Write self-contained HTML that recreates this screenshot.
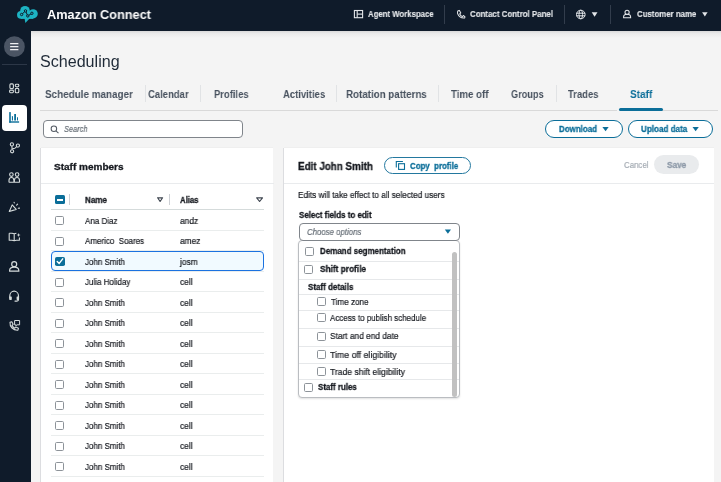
<!DOCTYPE html>
<html><head><meta charset="utf-8"><style>
html,body{margin:0;padding:0;}
body{width:721px;height:482px;overflow:hidden;position:relative;background:#f4f4f4;font-family:"Liberation Sans",sans-serif;}
div,span.t{position:absolute;}
span.t{white-space:pre;will-change:transform;}
span.r{-webkit-text-stroke:0.2px currentColor;}
span.b{-webkit-text-stroke:0.3px currentColor;}
span.h{-webkit-text-stroke:0.15px currentColor;}
svg{position:absolute;left:0;top:0;}
</style></head><body>
<div style="left:0px;top:0px;width:721px;height:31px;background:#0f1b2a"></div><div style="left:0px;top:31px;width:31px;height:451px;background:#0f1b2a"></div><div style="left:31px;top:31px;width:690px;height:7px;background:linear-gradient(#d8d8d9,#eaeaea 35%,#f4f4f4)"></div><span class="t" style="left:46.90px;top:8.76px;font-size:12.8px;line-height:12.8px;font-weight:700;color:#ffffff;transform:scaleX(0.9941);transform-origin:0 0;">Amazon Connect</span><span class="t h" style="left:367.60px;top:10.11px;font-size:9.2px;line-height:9.2px;font-weight:700;color:#e3e6e9;transform:scaleX(0.8484);transform-origin:0 0;">Agent Workspace</span><div style="left:444px;top:5px;width:1px;height:18.5px;background:#323d4c"></div><div style="left:564px;top:5px;width:1px;height:18.5px;background:#323d4c"></div><div style="left:610.2px;top:5px;width:1px;height:18.5px;background:#323d4c"></div><span class="t h" style="left:470.30px;top:10.11px;font-size:9.2px;line-height:9.2px;font-weight:700;color:#e3e6e9;transform:scaleX(0.8602);transform-origin:0 0;">Contact Control Panel</span><span class="t h" style="left:636.50px;top:10.21px;font-size:9.2px;line-height:9.2px;font-weight:700;color:#e3e6e9;transform:scaleX(0.8540);transform-origin:0 0;">Customer name</span><div style="left:2px;top:64px;width:25px;height:1px;background:#2c3747"></div><div style="left:1.7px;top:105.3px;width:25.3px;height:25.5px;background:#ffffff;border-radius:4px"></div><span class="t" style="left:40.40px;top:54.26px;font-size:16px;line-height:16px;font-weight:400;color:#1f2a37;transform:scaleX(1.0054);transform-origin:0 0;">Scheduling</span><div style="left:40px;top:109.5px;width:577px;height:1.5px;background:#d9d9d9"></div><div style="left:619px;top:109.5px;width:99px;height:1.5px;background:#d9d9d9"></div><div style="left:619px;top:108px;width:44px;height:2.8px;background:#0b6e99;border-radius:1.5px"></div><span class="t" style="left:45.20px;top:89.11px;font-size:11.8px;line-height:11.8px;font-weight:700;color:#47515e;transform:scaleX(0.8379);transform-origin:0 0;">Schedule manager</span><span class="t" style="left:148.30px;top:89.11px;font-size:11.8px;line-height:11.8px;font-weight:700;color:#47515e;transform:scaleX(0.8042);transform-origin:0 0;">Calendar</span><span class="t" style="left:213.50px;top:89.11px;font-size:11.8px;line-height:11.8px;font-weight:700;color:#47515e;transform:scaleX(0.7994);transform-origin:0 0;">Profiles</span><span class="t" style="left:282.90px;top:89.11px;font-size:11.8px;line-height:11.8px;font-weight:700;color:#47515e;transform:scaleX(0.8045);transform-origin:0 0;">Activities</span><span class="t" style="left:346.10px;top:89.11px;font-size:11.8px;line-height:11.8px;font-weight:700;color:#47515e;transform:scaleX(0.8274);transform-origin:0 0;">Rotation patterns</span><span class="t" style="left:451.20px;top:89.11px;font-size:11.8px;line-height:11.8px;font-weight:700;color:#47515e;transform:scaleX(0.8211);transform-origin:0 0;">Time off</span><span class="t" style="left:510.90px;top:89.11px;font-size:11.8px;line-height:11.8px;font-weight:700;color:#47515e;transform:scaleX(0.7771);transform-origin:0 0;">Groups</span><span class="t" style="left:567.50px;top:89.11px;font-size:11.8px;line-height:11.8px;font-weight:700;color:#47515e;transform:scaleX(0.7990);transform-origin:0 0;">Trades</span><span class="t" style="left:630.00px;top:89.11px;font-size:11.8px;line-height:11.8px;font-weight:700;color:#0b6e99;transform:scaleX(0.8544);transform-origin:0 0;">Staff</span><div style="left:144.5px;top:85.3px;width:1px;height:17px;background:#e1e3e5"></div><div style="left:200.3px;top:85.3px;width:1px;height:17px;background:#e1e3e5"></div><div style="left:336.1px;top:85.3px;width:1px;height:17px;background:#e1e3e5"></div><div style="left:438.0px;top:85.3px;width:1px;height:17px;background:#e1e3e5"></div><div style="left:555.5px;top:85.3px;width:1px;height:17px;background:#e1e3e5"></div><div style="left:43.2px;top:120.2px;width:199.5px;height:17.8px;background:#fff;border:1px solid #80858b;border-radius:4px;box-sizing:border-box"></div><span class="t r" style="left:64.20px;top:124.98px;font-size:9px;line-height:9px;font-weight:400;color:#687078;transform:scaleX(0.8272);transform-origin:0 0;font-style:italic;">Search</span><div style="left:545.4px;top:119.9px;width:77.2px;height:18px;background:#fff;border:1.6px solid #0b6e99;border-radius:9px;box-sizing:border-box"></div><span class="t b" style="left:558.50px;top:124.91px;font-size:9.2px;line-height:9.2px;font-weight:700;color:#0b6e99;transform:scaleX(0.8655);transform-origin:0 0;">Download</span><div style="left:628.4px;top:119.9px;width:84.4px;height:18px;background:#fff;border:1.6px solid #0b6e99;border-radius:9px;box-sizing:border-box"></div><span class="t b" style="left:640.80px;top:124.91px;font-size:9.2px;line-height:9.2px;font-weight:700;color:#0b6e99;transform:scaleX(0.8787);transform-origin:0 0;">Upload data</span><div style="left:40.7px;top:148px;width:232.5px;height:340px;background:#fff;box-shadow:-1px 0 0.5px #dcdde0, 0 -1px 1px #efefef"></div><span class="t b" style="left:54.00px;top:161.69px;font-size:9.7px;line-height:9.7px;font-weight:700;color:#16191f;transform:scaleX(1.0340);transform-origin:0 0;">Staff members</span><div style="left:40.5px;top:183px;width:233px;height:1px;background:#e9ebed"></div><div style="left:55.2px;top:195px;width:9.4px;height:9.2px;background:#0b6e99;border-radius:1.5px"></div><div style="left:56.9px;top:198.9px;width:6.1px;height:1.7px;background:#fff"></div><div style="left:69.3px;top:194.3px;width:1px;height:10.5px;background:#cdd0d5"></div><span class="t b" style="left:85.20px;top:196.31px;font-size:9.2px;line-height:9.2px;font-weight:700;color:#16191f;transform:scaleX(0.8749);transform-origin:0 0;">Name</span><div style="left:169.3px;top:193.7px;width:1px;height:11.7px;background:#cdd0d5"></div><span class="t b" style="left:180.40px;top:196.31px;font-size:9.2px;line-height:9.2px;font-weight:700;color:#16191f;transform:scaleX(0.8421);transform-origin:0 0;">Alias</span><div style="left:50.8px;top:209.2px;width:213.5px;height:1px;background:#d5dbdb"></div><div style="left:50.8px;top:229.8px;width:213.5px;height:0.8px;background:#eaeded"></div><div style="left:55.3px;top:216.1px;width:9.2px;height:9px;border:1.3px solid #8d9399;border-radius:1.6px;box-sizing:border-box;background:#fff"></div><span class="t r" style="left:85.30px;top:216.61px;font-size:9.2px;line-height:9.2px;font-weight:400;color:#16191f;transform:scaleX(0.8696);transform-origin:0 0;">Ana Diaz</span><span class="t r" style="left:180.40px;top:216.61px;font-size:9.2px;line-height:9.2px;font-weight:400;color:#16191f;transform:scaleX(0.9130);transform-origin:0 0;">andz</span><div style="left:50.8px;top:250.3px;width:213.5px;height:0.8px;background:#eaeded"></div><div style="left:55.3px;top:236.6px;width:9.2px;height:9px;border:1.3px solid #8d9399;border-radius:1.6px;box-sizing:border-box;background:#fff"></div><span class="t r" style="left:85.30px;top:237.11px;font-size:9.2px;line-height:9.2px;font-weight:400;color:#16191f;transform:scaleX(0.8696);transform-origin:0 0;">Americo &nbsp;Soares</span><span class="t r" style="left:180.40px;top:237.11px;font-size:9.2px;line-height:9.2px;font-weight:400;color:#16191f;transform:scaleX(0.9130);transform-origin:0 0;">amez</span><div style="left:50.8px;top:270.8px;width:213.5px;height:0.8px;background:#eaeded"></div><div style="left:50.8px;top:251.1px;width:213.4px;height:20.4px;background:#f1faff;border:1.5px solid #1b72e0;border-radius:4px;box-sizing:border-box"></div><div style="left:55.1px;top:256.8px;width:9.6px;height:9.1px;background:#0b6e99;border-radius:1.8px"></div><span class="t r" style="left:85.30px;top:257.61px;font-size:9.2px;line-height:9.2px;font-weight:400;color:#16191f;transform:scaleX(0.8696);transform-origin:0 0;">John Smith</span><span class="t r" style="left:180.40px;top:257.61px;font-size:9.2px;line-height:9.2px;font-weight:400;color:#16191f;transform:scaleX(0.9130);transform-origin:0 0;">josm</span><div style="left:50.8px;top:291.3px;width:213.5px;height:0.8px;background:#eaeded"></div><div style="left:55.3px;top:277.6px;width:9.2px;height:9px;border:1.3px solid #8d9399;border-radius:1.6px;box-sizing:border-box;background:#fff"></div><span class="t r" style="left:85.30px;top:278.11px;font-size:9.2px;line-height:9.2px;font-weight:400;color:#16191f;transform:scaleX(0.8696);transform-origin:0 0;">Julia Holiday</span><span class="t r" style="left:180.40px;top:278.11px;font-size:9.2px;line-height:9.2px;font-weight:400;color:#16191f;transform:scaleX(0.9130);transform-origin:0 0;">cell</span><div style="left:50.8px;top:311.8px;width:213.5px;height:0.8px;background:#eaeded"></div><div style="left:55.3px;top:298.1px;width:9.2px;height:9px;border:1.3px solid #8d9399;border-radius:1.6px;box-sizing:border-box;background:#fff"></div><span class="t r" style="left:85.30px;top:298.61px;font-size:9.2px;line-height:9.2px;font-weight:400;color:#16191f;transform:scaleX(0.8696);transform-origin:0 0;">John Smith</span><span class="t r" style="left:180.40px;top:298.61px;font-size:9.2px;line-height:9.2px;font-weight:400;color:#16191f;transform:scaleX(0.9130);transform-origin:0 0;">cell</span><div style="left:50.8px;top:332.3px;width:213.5px;height:0.8px;background:#eaeded"></div><div style="left:55.3px;top:318.6px;width:9.2px;height:9px;border:1.3px solid #8d9399;border-radius:1.6px;box-sizing:border-box;background:#fff"></div><span class="t r" style="left:85.30px;top:319.11px;font-size:9.2px;line-height:9.2px;font-weight:400;color:#16191f;transform:scaleX(0.8696);transform-origin:0 0;">John Smith</span><span class="t r" style="left:180.40px;top:319.11px;font-size:9.2px;line-height:9.2px;font-weight:400;color:#16191f;transform:scaleX(0.9130);transform-origin:0 0;">cell</span><div style="left:50.8px;top:352.8px;width:213.5px;height:0.8px;background:#eaeded"></div><div style="left:55.3px;top:339.1px;width:9.2px;height:9px;border:1.3px solid #8d9399;border-radius:1.6px;box-sizing:border-box;background:#fff"></div><span class="t r" style="left:85.30px;top:339.61px;font-size:9.2px;line-height:9.2px;font-weight:400;color:#16191f;transform:scaleX(0.8696);transform-origin:0 0;">John Smith</span><span class="t r" style="left:180.40px;top:339.61px;font-size:9.2px;line-height:9.2px;font-weight:400;color:#16191f;transform:scaleX(0.9130);transform-origin:0 0;">cell</span><div style="left:50.8px;top:373.3px;width:213.5px;height:0.8px;background:#eaeded"></div><div style="left:55.3px;top:359.6px;width:9.2px;height:9px;border:1.3px solid #8d9399;border-radius:1.6px;box-sizing:border-box;background:#fff"></div><span class="t r" style="left:85.30px;top:360.11px;font-size:9.2px;line-height:9.2px;font-weight:400;color:#16191f;transform:scaleX(0.8696);transform-origin:0 0;">John Smith</span><span class="t r" style="left:180.40px;top:360.11px;font-size:9.2px;line-height:9.2px;font-weight:400;color:#16191f;transform:scaleX(0.9130);transform-origin:0 0;">cell</span><div style="left:50.8px;top:393.8px;width:213.5px;height:0.8px;background:#eaeded"></div><div style="left:55.3px;top:380.1px;width:9.2px;height:9px;border:1.3px solid #8d9399;border-radius:1.6px;box-sizing:border-box;background:#fff"></div><span class="t r" style="left:85.30px;top:380.61px;font-size:9.2px;line-height:9.2px;font-weight:400;color:#16191f;transform:scaleX(0.8696);transform-origin:0 0;">John Smith</span><span class="t r" style="left:180.40px;top:380.61px;font-size:9.2px;line-height:9.2px;font-weight:400;color:#16191f;transform:scaleX(0.9130);transform-origin:0 0;">cell</span><div style="left:50.8px;top:414.3px;width:213.5px;height:0.8px;background:#eaeded"></div><div style="left:55.3px;top:400.6px;width:9.2px;height:9px;border:1.3px solid #8d9399;border-radius:1.6px;box-sizing:border-box;background:#fff"></div><span class="t r" style="left:85.30px;top:401.11px;font-size:9.2px;line-height:9.2px;font-weight:400;color:#16191f;transform:scaleX(0.8696);transform-origin:0 0;">John Smith</span><span class="t r" style="left:180.40px;top:401.11px;font-size:9.2px;line-height:9.2px;font-weight:400;color:#16191f;transform:scaleX(0.9130);transform-origin:0 0;">cell</span><div style="left:50.8px;top:434.8px;width:213.5px;height:0.8px;background:#eaeded"></div><div style="left:55.3px;top:421.1px;width:9.2px;height:9px;border:1.3px solid #8d9399;border-radius:1.6px;box-sizing:border-box;background:#fff"></div><span class="t r" style="left:85.30px;top:421.61px;font-size:9.2px;line-height:9.2px;font-weight:400;color:#16191f;transform:scaleX(0.8696);transform-origin:0 0;">John Smith</span><span class="t r" style="left:180.40px;top:421.61px;font-size:9.2px;line-height:9.2px;font-weight:400;color:#16191f;transform:scaleX(0.9130);transform-origin:0 0;">cell</span><div style="left:50.8px;top:455.3px;width:213.5px;height:0.8px;background:#eaeded"></div><div style="left:55.3px;top:441.6px;width:9.2px;height:9px;border:1.3px solid #8d9399;border-radius:1.6px;box-sizing:border-box;background:#fff"></div><span class="t r" style="left:85.30px;top:442.11px;font-size:9.2px;line-height:9.2px;font-weight:400;color:#16191f;transform:scaleX(0.8696);transform-origin:0 0;">John Smith</span><span class="t r" style="left:180.40px;top:442.11px;font-size:9.2px;line-height:9.2px;font-weight:400;color:#16191f;transform:scaleX(0.9130);transform-origin:0 0;">cell</span><div style="left:50.8px;top:475.8px;width:213.5px;height:0.8px;background:#eaeded"></div><div style="left:55.3px;top:462.1px;width:9.2px;height:9px;border:1.3px solid #8d9399;border-radius:1.6px;box-sizing:border-box;background:#fff"></div><span class="t r" style="left:85.30px;top:462.61px;font-size:9.2px;line-height:9.2px;font-weight:400;color:#16191f;transform:scaleX(0.8696);transform-origin:0 0;">John Smith</span><span class="t r" style="left:180.40px;top:462.61px;font-size:9.2px;line-height:9.2px;font-weight:400;color:#16191f;transform:scaleX(0.9130);transform-origin:0 0;">cell</span><div style="left:283.7px;top:148px;width:430px;height:340px;background:#fff;box-shadow:-1px 0 0.5px #dcdde0, 0 -1px 1px #efefef"></div><span class="t b" style="left:297.90px;top:161.74px;font-size:10px;line-height:10px;font-weight:700;color:#16191f;transform:scaleX(0.9828);transform-origin:0 0;">Edit John Smith</span><div style="left:383.5px;top:156.6px;width:87.3px;height:17.6px;border:1.6px solid #23789f;border-radius:9px;box-sizing:border-box"></div><span class="t b" style="left:409.80px;top:161.61px;font-size:9.2px;line-height:9.2px;font-weight:700;color:#0b6e99;transform:scaleX(0.8601);transform-origin:0 0;">Copy &nbsp;profile</span><span class="t r" style="left:624.00px;top:161.11px;font-size:9.2px;line-height:9.2px;font-weight:400;color:#a4abb3;transform:scaleX(0.8599);transform-origin:0 0;">Cancel</span><div style="left:653.7px;top:155.3px;width:45.2px;height:19.1px;background:#e9ebed;border-radius:9.5px"></div><span class="t b" style="left:666.70px;top:161.21px;font-size:9.2px;line-height:9.2px;font-weight:700;color:#8d99a8;transform:scaleX(0.8990);transform-origin:0 0;">Save</span><div style="left:283.5px;top:183px;width:430.2px;height:1px;background:#e9ebed"></div><span class="t r" style="left:297.50px;top:191.21px;font-size:9.2px;line-height:9.2px;font-weight:400;color:#16191f;transform:scaleX(0.8925);transform-origin:0 0;">Edits will take effect to all selected users</span><span class="t b" style="left:298.70px;top:211.21px;font-size:9.2px;line-height:9.2px;font-weight:700;color:#16191f;transform:scaleX(0.8670);transform-origin:0 0;">Select fields to edit</span><div style="left:297.5px;top:240.3px;width:162.6px;height:158.2px;background:#fff;border:1.2px solid #babdc1;border-radius:4px;box-sizing:border-box;box-shadow:0 1px 2px rgba(0,0,0,0.12)"></div><div style="left:298.6px;top:223px;width:161.4px;height:17.9px;background:#fff;border:1.2px solid #80858b;border-radius:4px;box-sizing:border-box"></div><span class="t r" style="left:306.90px;top:228.38px;font-size:9px;line-height:9px;font-weight:400;color:#687078;transform:scaleX(0.8697);transform-origin:0 0;font-style:italic;">Choose options</span><div style="left:298.5px;top:261.2px;width:160.5px;height:0.9px;background:#e6e8ea"></div><div style="left:298.5px;top:279.1px;width:160.5px;height:0.9px;background:#e6e8ea"></div><div style="left:298.5px;top:294.2px;width:160.5px;height:0.9px;background:#e6e8ea"></div><div style="left:298.5px;top:310.2px;width:160.5px;height:0.9px;background:#e6e8ea"></div><div style="left:298.5px;top:328.4px;width:160.5px;height:0.9px;background:#e6e8ea"></div><div style="left:298.5px;top:346.1px;width:160.5px;height:0.9px;background:#e6e8ea"></div><div style="left:298.5px;top:363.2px;width:160.5px;height:0.9px;background:#e6e8ea"></div><div style="left:298.5px;top:379.2px;width:160.5px;height:0.9px;background:#e6e8ea"></div><div style="left:452.2px;top:251.8px;width:5px;height:144.8px;background:#c1c1c1;border-radius:2.5px"></div><div style="left:305.3px;top:247.0px;width:9px;height:9px;border:1.3px solid #8d9399;border-radius:1.6px;box-sizing:border-box;background:#fff"></div><span class="t b" style="left:319.60px;top:247.31px;font-size:9.2px;line-height:9.2px;font-weight:700;color:#16191f;transform:scaleX(0.8688);transform-origin:0 0;">Demand segmentation</span><div style="left:304.1px;top:265.2px;width:9px;height:9px;border:1.3px solid #8d9399;border-radius:1.6px;box-sizing:border-box;background:#fff"></div><span class="t b" style="left:320.20px;top:265.11px;font-size:9.2px;line-height:9.2px;font-weight:700;color:#16191f;transform:scaleX(0.9011);transform-origin:0 0;">Shift profile</span><span class="t b" style="left:308.00px;top:282.81px;font-size:9.2px;line-height:9.2px;font-weight:700;color:#16191f;transform:scaleX(0.8718);transform-origin:0 0;">Staff details</span><div style="left:316.9px;top:296.9px;width:9px;height:9px;border:1.3px solid #8d9399;border-radius:1.6px;box-sizing:border-box;background:#fff"></div><span class="t r" style="left:330.70px;top:297.81px;font-size:9.2px;line-height:9.2px;font-weight:400;color:#16191f;transform:scaleX(0.8811);transform-origin:0 0;">Time zone</span><div style="left:316.9px;top:312.9px;width:9px;height:9px;border:1.3px solid #8d9399;border-radius:1.6px;box-sizing:border-box;background:#fff"></div><span class="t r" style="left:330.40px;top:314.01px;font-size:9.2px;line-height:9.2px;font-weight:400;color:#16191f;transform:scaleX(0.8671);transform-origin:0 0;">Access to publish schedule</span><div style="left:316.9px;top:331.5px;width:9px;height:9px;border:1.3px solid #8d9399;border-radius:1.6px;box-sizing:border-box;background:#fff"></div><span class="t r" style="left:330.40px;top:332.41px;font-size:9.2px;line-height:9.2px;font-weight:400;color:#16191f;transform:scaleX(0.9060);transform-origin:0 0;">Start and end date</span><div style="left:316.9px;top:350.0px;width:9px;height:9px;border:1.3px solid #8d9399;border-radius:1.6px;box-sizing:border-box;background:#fff"></div><span class="t r" style="left:330.40px;top:350.61px;font-size:9.2px;line-height:9.2px;font-weight:400;color:#16191f;transform:scaleX(0.9521);transform-origin:0 0;">Time off eligibility</span><div style="left:316.9px;top:366.8px;width:9px;height:9px;border:1.3px solid #8d9399;border-radius:1.6px;box-sizing:border-box;background:#fff"></div><span class="t r" style="left:330.40px;top:367.81px;font-size:9.2px;line-height:9.2px;font-weight:400;color:#16191f;transform:scaleX(0.9322);transform-origin:0 0;">Trade shift eligibility</span><div style="left:304.4px;top:383.1px;width:9px;height:9px;border:1.3px solid #8d9399;border-radius:1.6px;box-sizing:border-box;background:#fff"></div><span class="t b" style="left:318.10px;top:383.01px;font-size:9.2px;line-height:9.2px;font-weight:700;color:#16191f;transform:scaleX(0.8634);transform-origin:0 0;">Staff rules</span>
<svg width="721" height="482" viewBox="0 0 721 482"><g fill="#1db3c3"><circle cx="25" cy="10.7" r="4.8"/><circle cx="33.2" cy="13.8" r="4.6"/><circle cx="20.9" cy="14.8" r="3.9"/><rect x="20.9" y="11" width="12.3" height="7.9"/><polygon points="24.3,17 31,17 25.4,22.9"/></g><g stroke="#0f1b2a" stroke-width="1" fill="#1db3c3"><polyline points="21.6,14.5 25.5,10.9 27.8,15.9 31.9,13.3" fill="none"/><circle cx="21.6" cy="14.5" r="1.2"/><circle cx="25.5" cy="10.9" r="1.2"/><circle cx="27.8" cy="15.9" r="1.2"/><circle cx="31.9" cy="13.3" r="1.2"/></g><g stroke="#e3e6e9" stroke-width="1.1" fill="none"><rect x="354.4" y="10.5" width="8.2" height="7.2"/><line x1="357.2" y1="10.5" x2="357.2" y2="17.7"/><line x1="357.2" y1="14.1" x2="362.6" y2="14.1"/></g><path d="M458.1,10.7 L459.4,10.4 L460.8,12.9 L459.7,13.9 Q460.7,15.7 462.3,16.6 L463.4,15.5 L465,16.8 L464.6,18 Q459.6,18.6 457.6,13.6 Q457.2,11.6 458.1,10.7 Z" fill="none" stroke="#e3e6e9" stroke-width="1.05" stroke-linejoin="round"/><g fill="none" stroke="#e3e6e9" stroke-width="1"><circle cx="580.8" cy="14.5" r="4.3"/><ellipse cx="580.8" cy="14.5" rx="1.8" ry="4.3"/><line x1="576.5" y1="13.2" x2="585.1" y2="13.2"/><line x1="576.5" y1="15.8" x2="585.1" y2="15.8"/></g><polygon points="591.7,12.3 597.5,12.3 594.6,16.7" fill="#e3e6e9"/><g fill="none" stroke="#e3e6e9" stroke-width="1.05"><circle cx="627.1" cy="12.3" r="2.1"/><path d="M623.6,17.7 v-0.9 c0,-1.7 1.5,-2.6 3.5,-2.6 s3.5,0.9 3.5,2.6 v0.9 z"/></g><polygon points="702.1,12.2 707.6,12.2 704.85,16.4" fill="#e3e6e9"/><circle cx="14.4" cy="46.7" r="10.4" fill="#4b5564"/><g stroke="#eef0f2" stroke-width="1.3" stroke-linecap="round"><line x1="10.6" y1="43.7" x2="17.9" y2="43.7"/><line x1="10.6" y1="46.7" x2="17.9" y2="46.7"/><line x1="10.6" y1="49.7" x2="17.9" y2="49.7"/></g><g fill="none" stroke="#d5dbdb" stroke-width="1.1"><rect x="9.9" y="83.9" width="3.5" height="4.6" rx="1"/><rect x="15.3" y="84.3" width="3.5" height="2.4" rx="0.9"/><rect x="9.6" y="90.1" width="3.8" height="2.6" rx="0.9"/><rect x="15.3" y="88.4" width="3.5" height="4.3" rx="1"/></g><g fill="#0b6e99"><rect x="9.2" y="112.1" width="1.6" height="10.6"/><rect x="9.2" y="121.3" width="9.9" height="1.4"/><rect x="11.9" y="116.1" width="1.1" height="4.4" rx="0.5"/><rect x="14.2" y="114" width="1.8" height="6.5"/><rect x="17" y="117.1" width="1" height="3.4" rx="0.5"/></g><g fill="none" stroke="#d5dbdb" stroke-width="1.1"><circle cx="11.9" cy="144.4" r="1.6"/><circle cx="12.1" cy="151.3" r="1.6"/><circle cx="17.9" cy="145.6" r="1.6"/><line x1="11.9" y1="146" x2="12.1" y2="149.7"/><polyline points="12.3,148.6 14.8,148.3 16.7,146.7"/></g><g fill="none" stroke="#d5dbdb" stroke-width="1.1"><circle cx="11.4" cy="174.6" r="1.8"/><circle cx="17.1" cy="174.6" r="1.8"/><path d="M9,182.3 v-1.8 c0,-1.8 1,-3 2.4,-3 s2.5,1.2 2.5,3 v1.8 M14.4,182.3 v-1.8 c0,-1.8 1.1,-3 2.6,-3 s2.5,1.2 2.5,3 v1.8 M8.8,182.3 h11"/></g><g fill="none" stroke="#d5dbdb" stroke-width="1.1" stroke-linejoin="round" stroke-linecap="round"><polygon points="9.3,211.5 12.2,204.9 16.2,209.4"/><line x1="14.1" y1="202.3" x2="14.3" y2="202.9"/><line x1="16.6" y1="205.1" x2="17.6" y2="204.1"/><line x1="18.3" y1="208.3" x2="19.5" y2="208.1"/></g><g fill="none" stroke="#d5dbdb" stroke-width="1.1" stroke-linejoin="round"><path d="M9.2,233.2 h2.8 l2.2,0.6 l2.2,-0.6 M9.2,233.2 v7 h2.8 l2.2,0.5 l2.2,-0.5 h3 v-2.6 M14.2,233.8 v6.8"/></g><path d="M18.6,233 l0.55,1.45 l1.45,0.55 l-1.45,0.55 l-0.55,1.45 l-0.55,-1.45 l-1.45,-0.55 l1.45,-0.55 z" fill="#d5dbdb"/><g fill="none" stroke="#d5dbdb" stroke-width="1.2"><circle cx="14.2" cy="264.2" r="2.5"/><path d="M9.6,271.2 v-0.8 c0,-2 2,-3.3 4.6,-3.3 s4.6,1.3 4.6,3.3 v0.8 z"/></g><g fill="none" stroke="#d5dbdb" stroke-width="1.2" stroke-linecap="round"><path d="M9.8,298 v-2 c0,-2.8 2,-4.8 4.3,-4.8 s4.4,2 4.4,4.8 v3.6 c0,1 -0.6,1.5 -1.5,1.5 h-2"/></g><g fill="#d5dbdb"><rect x="9.2" y="296.5" width="2.6" height="3.4" rx="0.6"/><rect x="16.6" y="296.5" width="2.2" height="3.4" rx="0.6"/></g><path d="M10,322.3 l1.8,-0.6 l1.3,2.6 l-1.1,1 c0.6,1.4 1.5,2.3 2.8,2.9 l1,-1.2 l2.6,1.3 l-0.5,1.9 c-4.6,0.3 -8.4,-3.5 -7.9,-7.9 z" fill="none" stroke="#d5dbdb" stroke-width="1.1" stroke-linejoin="round"/><path d="M14.6,320.5 h5 v4.3 h-2.6 l-1.2,1 v-1 h-1.2 z" fill="none" stroke="#d5dbdb" stroke-width="1"/><g fill="none" stroke="#545b64" stroke-width="1.05"><circle cx="53.9" cy="128.8" r="2.75"/><line x1="55.9" y1="130.8" x2="58.5" y2="133.1"/></g><polygon points="602.4,126.9 608.7,126.9 605.55,131.2" fill="#0b6e99"/><polygon points="692.5,126.9 698.8,126.9 695.65,131.2" fill="#0b6e99"/><polygon points="157.6,197.8 162.6,197.8 160.1,201.5" fill="none" stroke="#3f4650" stroke-width="1.15" stroke-linejoin="round"/><polygon points="256.7,197.8 262.5,197.8 259.6,201.5" fill="none" stroke="#3f4650" stroke-width="1.15" stroke-linejoin="round"/><polyline points="57.2,261.4 59.2,263.4 62.7,258.8" fill="none" stroke="#fff" stroke-width="1.4" stroke-linecap="round" stroke-linejoin="round"/><g fill="none" stroke="#0b6e99" stroke-width="1.1"><path d="M396.3,167.6 v-6.1 h6.6"/><rect x="398.6" y="163.7" width="5.9" height="5.7"/></g><polygon points="444.8,229.5 451,229.5 447.9,233.7" fill="#0b6e99"/></svg>
</body></html>
